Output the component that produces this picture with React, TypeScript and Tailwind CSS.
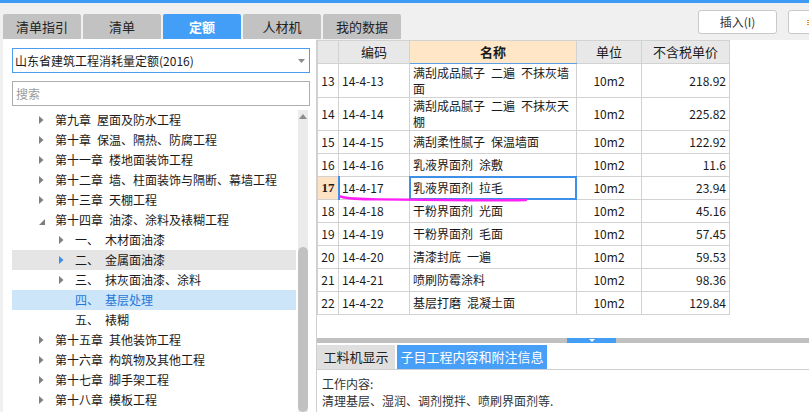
import React from "react";

type Tree = { level: 0 | 1; label: string; tri: "none" | "right" | "down" | "blue"; state?: "hover" | "selected" };

const tree: Tree[] = [
  { level: 0, label: "第九章\u2002屋面及防水工程", tri: "right" },
  { level: 0, label: "第十章\u2002保温、隔热、防腐工程", tri: "right" },
  { level: 0, label: "第十一章\u2002楼地面装饰工程", tri: "right" },
  { level: 0, label: "第十二章\u2002墙、柱面装饰与隔断、幕墙工程", tri: "right" },
  { level: 0, label: "第十三章\u2002天棚工程", tri: "right" },
  { level: 0, label: "第十四章\u2002油漆、涂料及裱糊工程", tri: "down" },
  { level: 1, label: "一、\u2002木材面油漆", tri: "right" },
  { level: 1, label: "二、\u2002金属面油漆", tri: "blue", state: "hover" },
  { level: 1, label: "三、\u2002抹灰面油漆、涂料", tri: "right" },
  { level: 1, label: "四、\u2002基层处理", tri: "none", state: "selected" },
  { level: 1, label: "五、\u2002裱糊", tri: "none" },
  { level: 0, label: "第十五章\u2002其他装饰工程", tri: "right" },
  { level: 0, label: "第十六章\u2002构筑物及其他工程", tri: "right" },
  { level: 0, label: "第十七章\u2002脚手架工程", tri: "right" },
  { level: 0, label: "第十八章\u2002模板工程", tri: "right" },
];

type Row = { n: number; code: string; name: string[]; unit: string; price: string; h: string };

const rows: Row[] = [
  { n: 13, code: "14-4-13", name: ["满刮成品腻子\u2002二遍\u2002不抹灰墙", "面"], unit: "10m2", price: "218.92", h: "h-[34px]" },
  { n: 14, code: "14-4-14", name: ["满刮成品腻子\u2002二遍\u2002不抹灰天", "棚"], unit: "10m2", price: "225.82", h: "h-[32px]" },
  { n: 15, code: "14-4-15", name: ["满刮柔性腻子\u2002保温墙面"], unit: "10m2", price: "122.92", h: "h-[23px]" },
  { n: 16, code: "14-4-16", name: ["乳液界面剂\u2002涂敷"], unit: "10m2", price: "11.6", h: "h-[23px]" },
  { n: 17, code: "14-4-17", name: ["乳液界面剂\u2002拉毛"], unit: "10m2", price: "23.94", h: "h-[23px]" },
  { n: 18, code: "14-4-18", name: ["干粉界面剂\u2002光面"], unit: "10m2", price: "45.16", h: "h-[23px]" },
  { n: 19, code: "14-4-19", name: ["干粉界面剂\u2002毛面"], unit: "10m2", price: "57.45", h: "h-[23px]" },
  { n: 20, code: "14-4-20", name: ["清漆封底\u2002一遍"], unit: "10m2", price: "59.53", h: "h-[23px]" },
  { n: 21, code: "14-4-21", name: ["喷刷防霉涂料"], unit: "10m2", price: "98.36", h: "h-[23px]" },
  { n: 22, code: "14-4-22", name: ["基层打磨\u2002混凝土面"], unit: "10m2", price: "129.84", h: "h-[23px]" },
];

function Tri({ kind }: { kind: Tree["tri"] }) {
  if (kind === "down")
    return (
      <svg width="6" height="6" viewBox="0 0 6 6" className="shrink-0 mt-[4px]">
        <polygon points="6,0 6,6 0,6" fill="#7d7d7d" />
      </svg>
    );
  return (
    <svg width="5" height="8" viewBox="0 0 5 8" className="shrink-0">
      <polygon points="0,0 4.5,4 0,8" fill={kind === "blue" ? "#3a8ee8" : "#808080"} />
    </svg>
  );
}

export default function App() {
  const tabs = ["清单指引", "清单", "定额", "人材机", "我的数据"];
  return (
    <div className="relative w-[809px] h-[412px] overflow-hidden bg-[#f0f0f0] flex flex-col font-['Noto_Sans_CJK_SC',sans-serif] text-[12px] text-[#1a1a1a]">
      <div className="h-[3px] bg-[#3d9bf3] shrink-0" />
      {/* top row */}
      <div className="h-[36px] shrink-0 flex items-start overflow-hidden">
        <div className="ml-[3px] mt-[11px] flex gap-[2px]">
          {tabs.map((t) => (
            <div
              key={t}
              className={
                t === "定额"
                  ? "w-[78px] h-[25px] flex items-center justify-center rounded-t-[2px] bg-[#439ef7] text-white font-bold text-[13px]"
                  : "w-[78px] h-[25px] flex items-center justify-center rounded-t-[2px] bg-[#c2c2c2] text-[#222] text-[13px]"
              }
            >
              {t}
            </div>
          ))}
        </div>
        <div className="ml-[297px] mt-[7px] w-[79px] h-[24px] shrink-0 bg-white border border-[#c9c9c9] rounded-[3px] flex items-center justify-center text-[#333]">
          插入(I)
        </div>
        <div className="ml-[11px] mt-[7px] w-[80px] h-[24px] shrink-0 bg-white border border-[#c9c9c9] rounded-[3px] flex items-center pl-[18px]">
          <div className="flex flex-col gap-[1px]">
            <span className="block w-[4px] h-[1px] bg-[#f08a1c]" />
            <span className="block w-[4px] h-[1px] bg-[#f08a1c]" />
            <span className="block w-[4px] h-[1px] bg-[#f08a1c]" />
          </div>
        </div>
      </div>
      {/* main */}
      <div className="flex flex-1 min-h-0">
        {/* left panel */}
        <div className="ml-[3px] w-[313px] shrink-0 bg-white flex flex-col">
          <div className="ml-[9px] mt-[9px] w-[298px] h-[25px] border border-[#4a9df0] flex items-center pl-[2px]">
            <span>山东省建筑工程消耗量定额(2016)</span>
            <svg width="7" height="4" viewBox="0 0 7 4" className="ml-auto mr-[4px]">
              <polygon points="0,0 7,0 3.5,4" fill="#8a8a8a" />
            </svg>
          </div>
          <div className="ml-[9px] mt-[8px] w-[298px] h-[25px] border border-[#adadad] flex items-center pl-[3px] text-[#9b9b9b]">
            搜索
          </div>
          <div className="mt-[4px] flex flex-1 min-h-0">
            <div className="ml-[9px] w-[284px] overflow-hidden">
              {tree.map((it) => {
                const bg =
                  it.state === "hover" ? "bg-[#e5e5e5]" : it.state === "selected" ? "bg-[#cce5f8]" : "";
                const color = it.state === "selected" ? "text-[#1e78d8]" : "text-[#1a1a1a]";
                const pad =
                  it.tri === "none" ? "pl-[63px]" : it.level === 0 ? "pl-[27px]" : "pl-[47px]";
                return (
                  <div key={it.label} className={`h-[20px] flex items-center whitespace-nowrap ${bg} ${color} ${pad}`}>
                    {it.tri !== "none" && <Tri kind={it.tri} />}
                    <span className={it.tri === "none" ? "" : it.tri === "down" ? "ml-[10px]" : "ml-[11px]"}>
                      {it.label}
                    </span>
                  </div>
                );
              })}
            </div>
            <div className="ml-[2px] w-[10px] bg-[#ebebeb] flex flex-col">
              <div className="h-[12px] flex items-center justify-center">
                <svg width="8" height="5" viewBox="0 0 8 5">
                  <polygon points="0,5 8,5 4,0" fill="#8c8c8c" />
                </svg>
              </div>
              <div className="h-[125px]" />
              <div className="flex-1 rounded-[5px] bg-[#c1c1c1]" />
            </div>
          </div>
        </div>
        {/* right panel */}
        <div className="mt-[1px] flex-1 min-w-0 bg-white border-l border-[#cfcfcf] flex flex-col">
          <div className="h-[298px] shrink-0">
            <table className="table-fixed border-collapse w-[412px]">
              <colgroup>
                <col className="w-[21px]" />
                <col className="w-[71px]" />
                <col className="w-[167px]" />
                <col className="w-[65px]" />
                <col className="w-[88px]" />
              </colgroup>
              <thead>
                <tr className="h-[23px]">
                  <th className="border border-[#d2d2d2] bg-[#e8e8e8] font-normal" />
                  <th className="border border-[#d2d2d2] bg-[#e8e8e8] font-normal text-[13px]">编码</th>
                  <th className="border border-[#d2d2d2] border-b-[#5a9fe8] bg-[#fee6c6] font-bold text-[13px]">名称</th>
                  <th className="border border-[#d2d2d2] bg-[#e8e8e8] font-normal text-[13px]">单位</th>
                  <th className="border border-[#d2d2d2] bg-[#e8e8e8] font-normal text-[13px]">不含税单价</th>
                </tr>
              </thead>
              <tbody>
                {rows.map((r) => {
                  const sel = r.n === 17;
                  return (
                    <tr key={r.n} className={r.h}>
                      <td
                        className={
                          sel
                            ? "border border-[#d2d2d2] bg-[#fde3c3] text-center font-bold font-['Liberation_Serif',serif] text-[13px]"
                            : "border border-[#d2d2d2] text-center"
                        }
                      >
                        {r.n}
                      </td>
                      <td className="relative border border-[#d2d2d2] pl-[3px]">
                        {sel && <span className="absolute left-[-1px] top-[-1px] bottom-[-1px] w-[2px] bg-[#3d8fe8]" />}
                        {r.code}
                      </td>
                      <td className="relative border border-[#d2d2d2] pl-[3px] leading-[16px] whitespace-nowrap">
                        {sel && <span className="absolute inset-[-1px] border-2 border-[#3d8fe8] pointer-events-none" />}
                        {r.name.map((l, i) => (
                          <div key={i}>{l}</div>
                        ))}
                      </td>
                      <td className="border border-[#d2d2d2] text-center">{r.unit}</td>
                      <td className="border border-[#d2d2d2] text-right pr-[3px]">{r.price}</td>
                    </tr>
                  );
                })}
              </tbody>
            </table>
          </div>
          {/* splitter */}
          <div className="h-[5px] shrink-0 bg-[#c0c0c0] flex">
            <div className="ml-[250px] w-[49px] bg-[#459ef5] flex items-center justify-center">
              <svg width="6" height="3" viewBox="0 0 6 3">
                <polygon points="0,0 6,0 3,3" fill="#ffffff" />
              </svg>
            </div>
          </div>
          {/* bottom tabs */}
          <div className="h-[27px] shrink-0 pt-[2px] flex items-end gap-[2px] border-b border-[#cfcfcf]">
            <div className="w-[78px] h-[24px] bg-[#dfdfdf] flex items-center justify-center text-[13px] text-[#222]">
              工料机显示
            </div>
            <div className="w-[150px] h-[24px] bg-[#479ff7] flex items-center justify-center text-[13px] text-white">
              子目工程内容和附注信息
            </div>
          </div>
          <div className="flex-1 pl-[5px] pt-[5px] leading-[17px] text-[#333]">
            <div>工作内容:</div>
            <div>清理基层、湿润、调剂搅拌、喷刷界面剂等.</div>
          </div>
        </div>
      </div>
      {/* handwritten annotation */}
      <svg className="absolute left-0 top-0 pointer-events-none" width="809" height="412" viewBox="0 0 809 412">
        <path
          d="M340.5 196.5 C 348 198.8, 360 199.3, 378 199.4 L 470 200.2 C 495 200.5, 512 200.4, 526 200"
          stroke="#ff1ef5"
          strokeWidth="2.4"
          fill="none"
          strokeLinecap="round"
        />
      </svg>
    </div>
  );
}
